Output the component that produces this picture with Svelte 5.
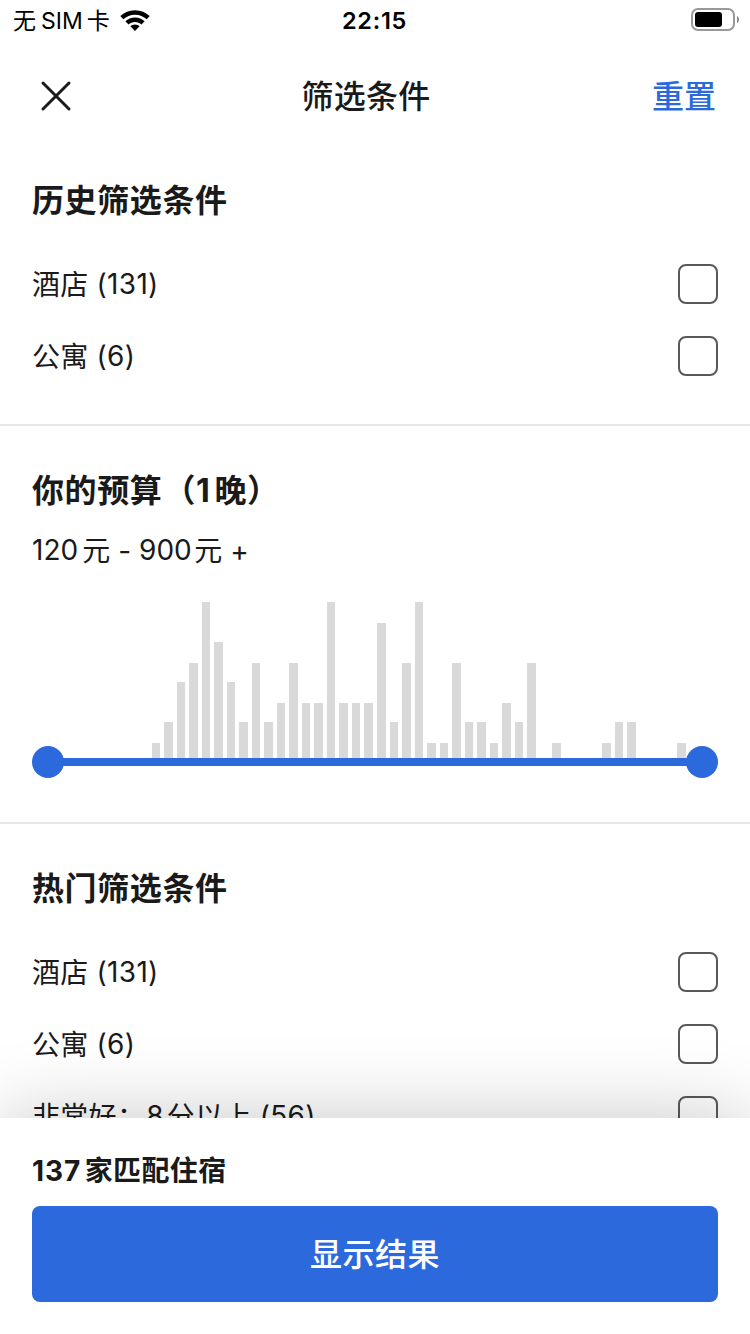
<script>
  const history = [
    { name: '酒店', count: '(131)' },
    { name: '公寓', count: '(6)' }
  ];
  const heights = [
    15, 36, 76, 95, 156, 116, 76, 36, 95, 36, 55, 95, 55, 55, 156, 55, 55, 55,
    135, 36, 95, 156, 15, 15, 95, 36, 36, 15, 55, 36, 95, 0, 15, 0, 0, 0, 15,
    36, 36, 0, 0, 0, 15
  ];
  // Bars sit on a 12.5px pitch, snapped to whole pixels.
  const bars = heights.map((height, i) => ({
    height,
    width: i < 18 ? (i % 2 ? 9 : 8) : i % 2 ? 8 : 9
  }));
</script>

{#snippet option(name, count)}
  <label class="option">
    <span class="label">{name}<span class="count">{count}</span></span>
    <input type="checkbox" />
  </label>
{/snippet}

<div class="screen">
  <div class="status">
    <div class="carrier">
      <span>无</span><span class="sim">SIM</span><span>卡</span>
      <svg class="wifi" width="30" height="22" viewBox="0 0 30 22">
        <path d="M15 0.2C9.3 0.2 4.1 2.4 0.3 6.1L3.3 9.300C6.400 6.400 10.400 4.700 15 4.700S23.600 6.400 26.700 9.300L29.700 6.100C25.900 2.400 20.700 .2 15 .2Z" />
        <path d="M15 7.400C11.300 7.400 7.900 8.800 5.400 11.200L8.500 14.400C10.200 12.800 12.400 11.900 15 11.900S19.800 12.800 21.500 14.400L24.600 11.200C22.100 8.800 18.700 7.400 15 7.400Z" />
        <path d="M15 14.500C13.200 14.500 11.600 15.200 10.400 16.300L15 21L19.600 16.300C18.400 15.200 16.800 14.500 15 14.500Z" />
      </svg>
    </div>
    <div class="time">22:15</div>
    <svg class="battery" width="49" height="24" viewBox="0 0 49 24">
      <rect x="1" y="1" width="42" height="21" rx="6" fill="none" stroke="#999" stroke-width="2" />
      <rect x="4" y="4" width="27" height="15" rx="3" />
      <path d="M46 8C47.3 8.6 48 10 48 11.500S47.300 14.400 46 15Z" fill="#888" />
    </svg>
  </div>

  <header>
    <button class="close" aria-label="关闭">
      <svg width="32" height="32" viewBox="0 0 32 32">
        <path d="M3 3L29 29M29 3L3 29" fill="none" stroke="#1a1a1a" stroke-width="3" stroke-linecap="round" />
      </svg>
    </button>
    <h1>筛选条件</h1>
    <button class="reset">重置</button>
  </header>

  <main>
    <section class="history">
      <h2>历史筛选条件</h2>
      {#each history as item}
        {@render option(item.name, item.count)}
      {/each}
    </section>

    <section class="budget">
      <h2>你的预算<span class="paren">（</span><span class="one">1</span>晚）</h2>
      <p class="range"><span class="low">120</span><span class="yuan">元</span><span class="dash">-</span><span class="low">900</span><span class="yuan high">元</span><span class="plus">+</span></p>
      <div class="chart">
        {#each bars as bar}
          <i style="width:{bar.width}px;height:{bar.height}px"></i>
        {/each}
      </div>
      <div class="slider"><b></b><b></b></div>
    </section>

    <section class="popular">
      <h2>热门筛选条件</h2>
      {#each history as item}
        {@render option(item.name, item.count)}
      {/each}
      <label class="option">
        <span class="label">非常好：<span class="eight">8</span>分以上<span class="count">(56)</span></span>
        <input type="checkbox" />
      </label>
    </section>
  </main>

  <footer>
    <p class="total"><span class="num">137</span>家匹配住宿</p>
    <button class="show">显示结果</button>
  </footer>
</div>

<style>
  :global(body) {
    margin: 0;
    background: #fff;
  }
  .screen {
    width: 750px;
    height: 1334px;
    display: flex;
    flex-direction: column;
    overflow: hidden;
    background: #fff;
    color: #1a1a1a;
    font-family: Inter, "Noto Sans CJK SC", sans-serif;
  }
  button {
    padding: 0;
    border: 0;
    background: none;
    font: inherit;
  }
  h1, h2, p {
    margin: 0;
  }
  .status {
    height: 40px;
    flex: none;
    display: grid;
    grid-template-columns: 1fr auto 1fr;
    align-items: center;
    box-sizing: border-box;
    padding: 0 10px 0 13px;
    color: #000;
    font-size: 24px;
    line-height: 42px;
  }
  .carrier {
    display: flex;
    align-items: center;
    font-size: 23px;
  }
  .sim {
    margin: 0 4px 0 5px;
    font-size: 23px;
  }
  .wifi {
    margin-left: 10px;
  }
  .time {
    margin-right: 4px;
    font-weight: 600;
    font-size: 23.5px;
    letter-spacing: 0.7px;
  }
  .battery {
    justify-self: end;
    margin-bottom: 2px;
  }
  header {
    height: 112px;
    flex: none;
    display: flex;
    align-items: center;
    box-sizing: border-box;
    padding: 0 34px 0 40px;
    font-size: 32px;
  }
  .close {
    width: 32px;
    height: 32px;
  }
  .close svg {
    display: block;
  }
  h1 {
    flex: 1;
    padding-left: 8px;
    text-align: center;
    font-size: 32px;
    font-weight: 500;
    line-height: 48px;
    padding-top: 2px;
    letter-spacing: 0.3px;
  }
  .reset {
    padding-top: 2px;
    color: #2c69dc;
    font-weight: 500;
    line-height: 48px;
  }
  main {
    flex: 1;
    min-height: 0;
    overflow: hidden;
  }
  section {
    box-sizing: border-box;
    padding: 0 32px;
  }
  h2 {
    height: 48px;
    font-size: 32px;
    line-height: 50px;
    font-weight: 700;
    letter-spacing: 0.6px;
  }
  .paren {
    margin-left: 1px;
  }
  .one {
    margin: 0 4px 0 0;
  }
  .history {
    height: 274px;
    padding-top: 24px;
    border-bottom: 2px solid #e7e7e7;
  }
  .history h2,
  .popular h2 {
    margin-bottom: 24px;
  }
  .option {
    display: flex;
    align-items: center;
    justify-content: space-between;
    height: 72px;
    font-size: 28px;
  }
  .label {
    padding-top: 2px;
    line-height: 40px;
    white-space: nowrap;
    letter-spacing: 0.3px;
  }
  .count {
    margin-left: 8px;
    line-height: 1;
    vertical-align: 1px;
  }
  .eight {
    margin: 0 3px 0 1px;
    line-height: 1;
    vertical-align: 1px;
  }
  input {
    appearance: none;
    flex: none;
    width: 40px;
    height: 40px;
    margin: 0;
    border: 2px solid #595959;
    border-radius: 8px;
    background: #fff;
  }
  .budget {
    height: 398px;
    padding-top: 40px;
    border-bottom: 2px solid #e7e7e7;
  }
  .range {
    display: flex;
    height: 40px;
    margin-top: 16px;
    font-size: 28px;
    line-height: 42px;
  }
  .low {
    line-height: 40px;
  }
  .yuan {
    margin-left: 4px;
  }
  .dash {
    margin: 0 8px;
  }
  .high {
    margin-left: 2.500px;
  }
  .plus {
    margin-left: 8px;
  }
  .chart {
    height: 156px;
    margin-top: 32px;
    padding-left: 120px;
    display: flex;
    align-items: flex-end;
    gap: 4px;
  }
  .chart i {
    flex: none;
    background: #d9d9d9;
  }
  .slider {
    display: flex;
    align-items: center;
    justify-content: space-between;
    height: 32px;
    margin-top: -12px;
    background: linear-gradient(#2c69dc, #2c69dc) center / 660px 8px no-repeat;
  }
  .slider b {
    width: 32px;
    height: 32px;
    border-radius: 50%;
    background: #2c69dc;
  }
  .popular {
    padding-top: 40px;
  }
  footer {
    height: 216px;
    flex: none;
    box-sizing: border-box;
    padding: 32px 32px 0;
    background: #fff;
    box-shadow: 0 0 80px rgba(0, 0, 0, 0.22);
    position: relative;
  }
  .total {
    height: 40px;
    margin-bottom: 16px;
    font-size: 28px;
    line-height: 42px;
    font-weight: 700;
    letter-spacing: 0.4px;
  }
  .num {
    margin-right: 3.500px;
    letter-spacing: 0.900px;
  }
  .show {
    display: block;
    width: 100%;
    height: 96px;
    border-radius: 8px;
    background: #2c69dc;
    color: #fff;
    font-size: 32px;
    font-weight: 500;
    line-height: 98px;
    letter-spacing: 0.500px;
  }
</style>
